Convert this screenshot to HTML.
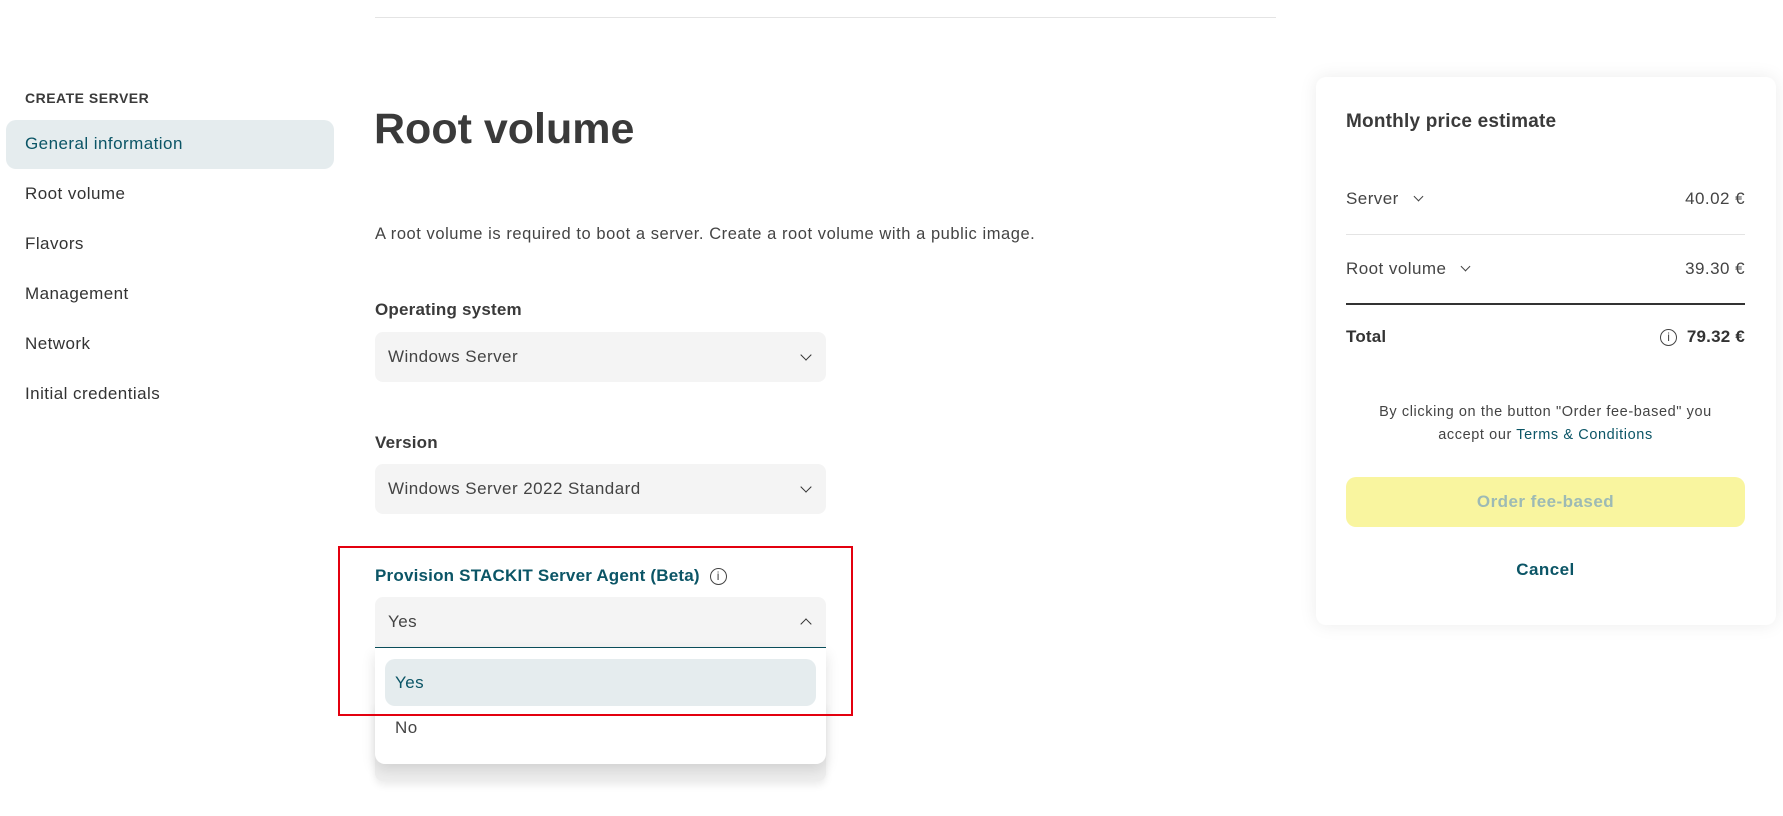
<!DOCTYPE html>
<html><head><meta charset="utf-8"><style>
*{box-sizing:border-box;margin:0;padding:0}
body{width:1783px;height:816px;background:#fff;font-family:"Liberation Sans",sans-serif;color:#333;position:relative;overflow:hidden;letter-spacing:.45px}
.a{position:absolute;white-space:nowrap}
.nav{left:25px;font-size:17px;color:#333;transform:translateY(-50%)}
.lbl{left:375px;font-size:17px;font-weight:bold;color:#3a3a3a;transform:translateY(-50%);letter-spacing:.2px}
.sel{position:absolute;left:375px;width:451px;height:50px;background:#f4f4f4;border-radius:8px;font-size:17px;color:#444;padding-left:13px;line-height:50px}
.chev{position:absolute;right:16px;top:50%;width:8px;height:8px;border-right:1.3px solid #333;border-bottom:1.3px solid #333;transform:translateY(-75%) rotate(45deg)}
.chev.up{transform:translateY(-25%) rotate(-135deg)}
.r{position:absolute;left:1346px;width:399px;font-size:17px;color:#444}
.r span.v{position:absolute;right:0}
.sc{display:inline-block;width:7px;height:7px;border-right:1.3px solid #444;border-bottom:1.3px solid #444;transform:rotate(45deg);margin-left:16px;position:relative;top:-4px}
.info{display:inline-block;width:17px;height:17px;border:1.3px solid #444;border-radius:50%;font-size:12px;text-align:center;line-height:15px;font-weight:normal;color:#444;vertical-align:middle;letter-spacing:0}
</style></head><body>
<div class="a" style="left:375px;top:17px;width:901px;height:1px;background:#e4e4e4"></div>
<div class="a" style="left:25px;top:90px;font-size:14px;font-weight:bold;color:#3a3a3a;letter-spacing:.5px">CREATE SERVER</div>
<div class="a" style="left:6px;top:120px;width:328px;height:49px;background:#e5ecee;border-radius:10px"></div>
<div class="a nav" style="top:144px;color:#0b5566">General information</div>
<div class="a nav" style="top:194px">Root volume</div>
<div class="a nav" style="top:244px">Flavors</div>
<div class="a nav" style="top:294px">Management</div>
<div class="a nav" style="top:344px">Network</div>
<div class="a nav" style="top:394px">Initial credentials</div>

<div class="a" style="left:374px;top:105px;font-size:43px;font-weight:bold;color:#3a3a3a;letter-spacing:0">Root volume</div>
<div class="a" style="left:375px;top:225px;font-size:16.5px;color:#444;letter-spacing:.55px">A root volume is required to boot a server. Create a root volume with a public image.</div>
<div class="a lbl" style="top:310px">Operating system</div>
<div class="sel" style="top:332px">Windows Server<div class="chev"></div></div>
<div class="a lbl" style="top:443px">Version</div>
<div class="sel" style="top:464px">Windows Server 2022 Standard<div class="chev"></div></div>
<div class="a lbl" style="top:576px;color:#0b5566">Provision STACKIT Server Agent (Beta) &nbsp;<span class="info">i</span></div>
<div class="a" style="left:375px;top:700px;width:451px;height:81px;background:#eee;border-radius:8px;box-shadow:0 4px 8px rgba(0,0,0,.08)"></div>
<div class="sel" style="top:597px;height:51px;border-radius:8px 8px 0 0;border-bottom:1.5px solid #0b4f5c;line-height:49px">Yes<div class="chev up"></div></div>
<div class="a" style="left:375px;top:648px;width:451px;height:116px;background:#fff;border-radius:0 0 10px 10px;box-shadow:0 6px 14px rgba(0,0,0,.12)">
<div class="a" style="left:10px;top:11px;width:431px;height:47px;background:#e5ecee;border-radius:10px;font-size:17px;color:#0b5566;line-height:47px;padding-left:10px">Yes</div>
<div class="a" style="left:20px;top:70px;font-size:17px;color:#444">No</div>
</div>
<div class="a" style="left:338px;top:546px;width:515px;height:170px;border:2.5px solid #e3000f"></div>

<div class="a" style="left:1316px;top:77px;width:460px;height:548px;background:#fff;border-radius:10px;box-shadow:0 0 18px rgba(0,0,0,.08)"></div>
<div class="r" style="top:111px;font-size:19px;font-weight:bold;color:#3a3a3a;letter-spacing:.2px">Monthly price estimate</div>
<div class="r" style="top:189px">Server<span class="sc"></span><span class="v">40.02 €</span></div>
<div class="a" style="left:1346px;top:234px;width:399px;height:1px;background:#e4e4e4"></div>
<div class="r" style="top:259px">Root volume<span class="sc"></span><span class="v">39.30 €</span></div>
<div class="a" style="left:1346px;top:303px;width:399px;height:1.5px;background:#333"></div>
<div class="r" style="top:327px;font-weight:bold;color:#333;letter-spacing:.2px">Total<span class="v"><span class="info">i</span>&nbsp; 79.32 €</span></div>
<div class="r" style="top:401px;font-size:14.5px;text-align:center;line-height:23px;color:#444;letter-spacing:.6px">By clicking on the button "Order fee-based" you<br>accept our <span style="color:#0b5566">Terms &amp; Conditions</span></div>
<div class="a" style="left:1346px;top:477px;width:399px;height:50px;background:#f9f59f;border-radius:10px;text-align:center;line-height:50px;font-size:17px;font-weight:bold;color:#9dbab5">Order fee-based</div>
<div class="r" style="top:560px;text-align:center;font-weight:bold;color:#0b5566">Cancel</div>
</body></html>
